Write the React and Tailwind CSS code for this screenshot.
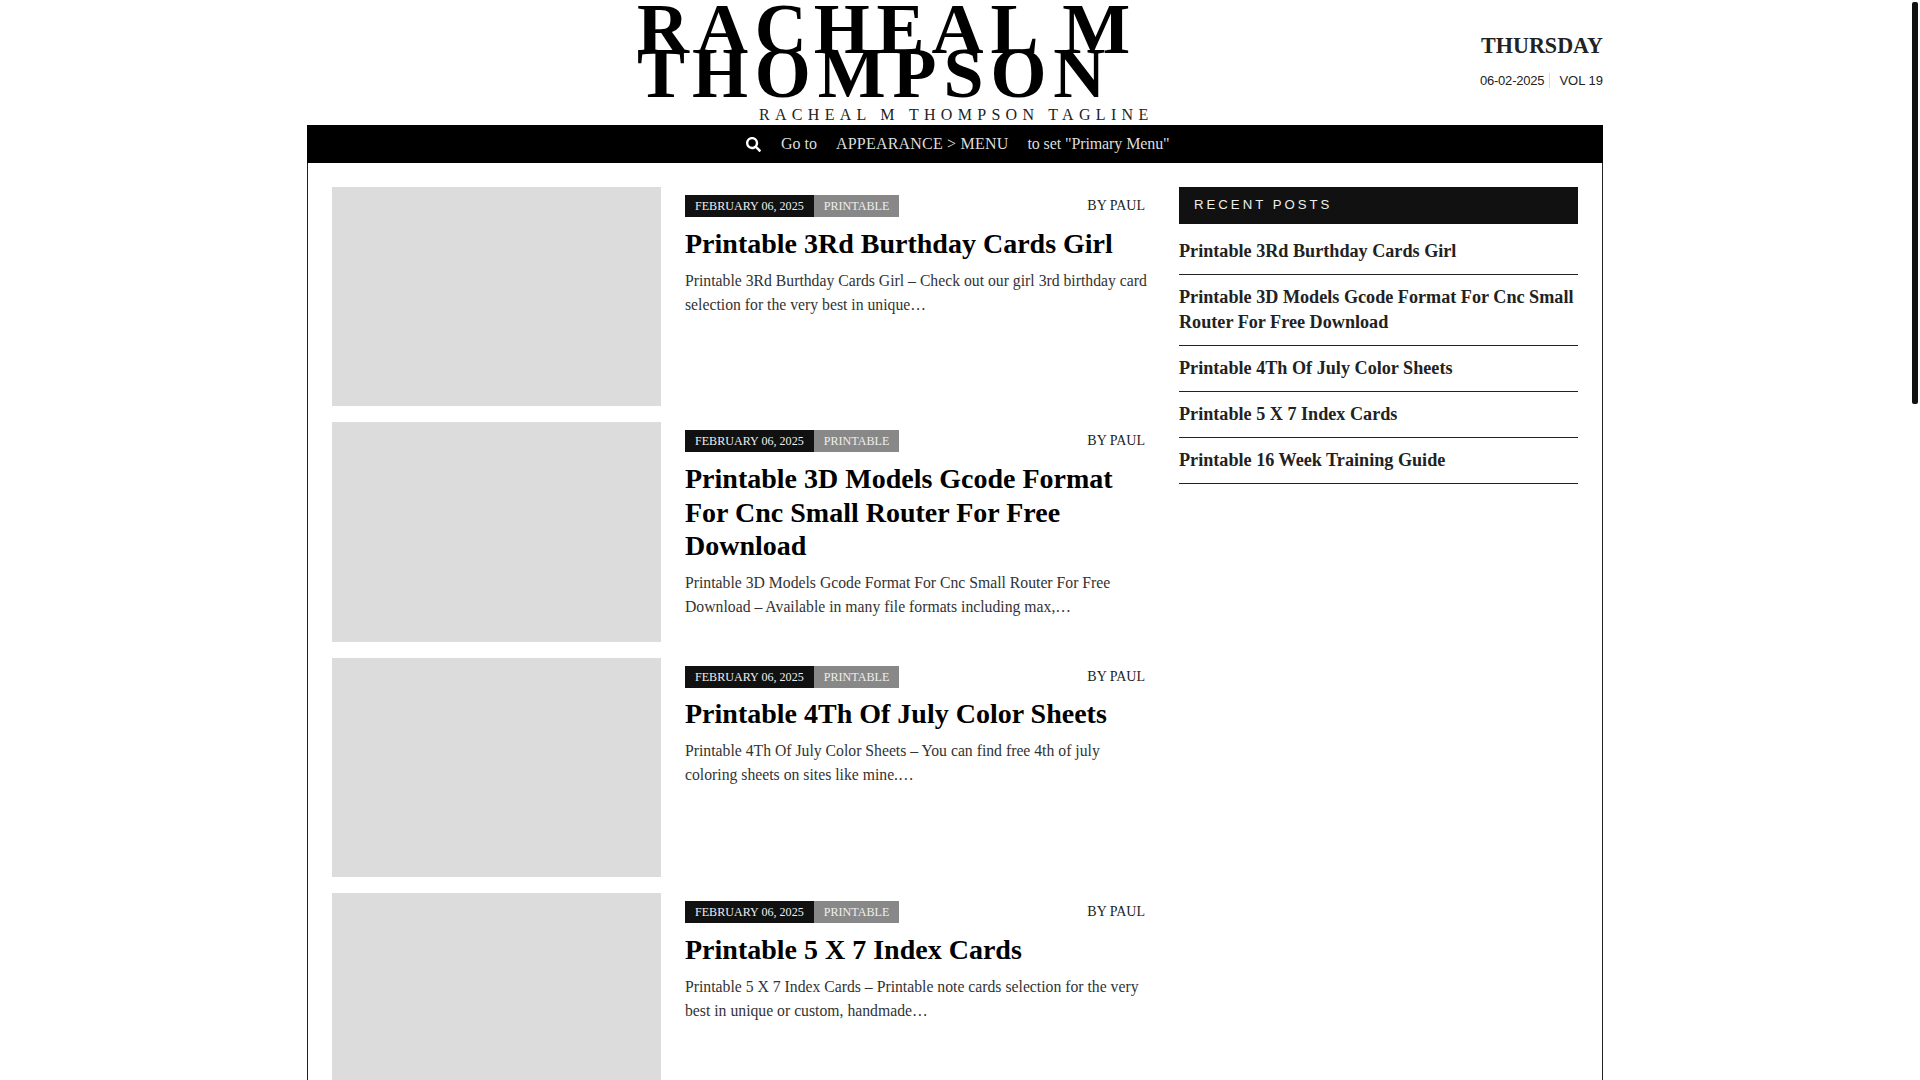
import React from 'react';
import { FaSearch } from 'react-icons/fa';

const posts = [
  {
    title: 'Printable 3Rd Burthday Cards Girl',
    excerpt:
      'Printable 3Rd Burthday Cards Girl – Check out our girl 3rd birthday card selection for the very best in unique…',
  },
  {
    title: 'Printable 3D Models Gcode Format For Cnc Small Router For Free Download',
    excerpt:
      'Printable 3D Models Gcode Format For Cnc Small Router For Free Download – Available in many file formats including max,…',
  },
  {
    title: 'Printable 4Th Of July Color Sheets',
    excerpt:
      'Printable 4Th Of July Color Sheets – You can find free 4th of july coloring sheets on sites like mine.…',
  },
  {
    title: 'Printable 5 X 7 Index Cards',
    excerpt:
      'Printable 5 X 7 Index Cards – Printable note cards selection for the very best in unique or custom, handmade…',
  },
];

const recentPosts = [
  'Printable 3Rd Burthday Cards Girl',
  'Printable 3D Models Gcode Format For Cnc Small Router For Free Download',
  'Printable 4Th Of July Color Sheets',
  'Printable 5 X 7 Index Cards',
  'Printable 16 Week Training Guide',
];

const PostCard = ({ post }) => (
  <article className="flex gap-6 mb-4">
    <div className="w-[329px] h-[219.33px] shrink-0 bg-[#dcdcdc]"></div>
    <div className="flex-1 pt-2">
      <div className="flex justify-between items-center pr-[7px] text-[12.1px] leading-[22px] uppercase">
        <div className="flex">
          <span className="bg-[#111] text-[#eee] px-2.5">February 06, 2025</span>
          <span className="bg-[#888] text-[#eee] px-2.5">Printable</span>
        </div>
        <span className="text-sm text-[#222]">By Paul</span>
      </div>
      <h2 className="mt-[9.6px] mb-[8.4px] text-[28px] leading-[33.6px] font-bold text-black">{post.title}</h2>
      <p className="text-[15.72px] leading-6 text-[#333]">{post.excerpt}</p>
    </div>
  </article>
);

export default function App() {
  return (
    <div className="h-screen overflow-hidden flex bg-white font-['Liberation_Serif',serif]">
      <div className="flex-1 min-w-0">
        <div className="w-[1296px] mx-auto min-h-screen flex flex-col">
          {/* Header */}
          <header className="h-[125px] flex">
            <div className="w-[330px] shrink-0"></div>
            <div className="w-[516px] shrink-0">
              <h1 className="text-[72px] leading-[44px] tracking-[6.9px] [word-spacing:-4px] font-bold text-black uppercase pt-[7px]">
                Racheal M Thompson
              </h1>
              <div className="mt-[8.4px] pl-[122px] text-base leading-6 tracking-[5.3px] whitespace-nowrap text-[#222] uppercase">
                Racheal M Thompson Tagline
              </div>
            </div>
            <div className="flex-1 flex flex-col items-end pt-[31px]">
              <div className="text-[22.1px] leading-[30px] font-bold text-[#222]">THURSDAY</div>
              <div className="mt-[12px] flex items-center font-['Liberation_Sans',sans-serif] text-[13px] leading-[15px] text-[#222]">
                <span className="pr-[5px] border-r border-[#ddd] tracking-[-0.2px]">06-02-2025</span>
                <span className="pl-[9px]">VOL 19</span>
              </div>
            </div>
          </header>

          {/* Nav */}
          <nav className="h-[38px] bg-black text-[#ddd] flex items-center text-base pl-[439px]">
            <FaSearch className="w-[15px] h-[15px] text-white" />
            <span className="ml-5">Go to</span>
            <span className="ml-[19px] tracking-[0.2px]">APPEARANCE &gt; MENU</span>
            <span className="ml-[19px] tracking-[-0.1px]">to set "Primary Menu"</span>
          </nav>

          {/* Main */}
          <main className="flex-1 border-x border-[#222] px-6 pt-6 flex gap-[27px]">
            <div className="w-[820px] shrink-0">
              {posts.map((post) => (
                <PostCard key={post.title} post={post} />
              ))}
            </div>
            <aside className="flex-1">
              <h3 className="h-[37px] bg-[#111] text-[#eee] pl-[15px] font-['Liberation_Sans',sans-serif] text-[13.2px] leading-[35px] tracking-[3px] uppercase">
                Recent Posts
              </h3>
              <ul className="mt-[5px]">
                {recentPosts.map((title) => (
                  <li
                    key={title}
                    className="py-[10px] border-b border-[#222] text-[18.16px] leading-[25px] font-bold text-[#222]"
                  >
                    {title}
                  </li>
                ))}
              </ul>
            </aside>
          </main>
        </div>
      </div>

      {/* Scrollbar rail */}
      <div className="w-[10px] shrink-0 pt-[2px] px-[2px]">
        <div className="h-[402px] bg-[#111] rounded-[2px]"></div>
      </div>
    </div>
  );
}
